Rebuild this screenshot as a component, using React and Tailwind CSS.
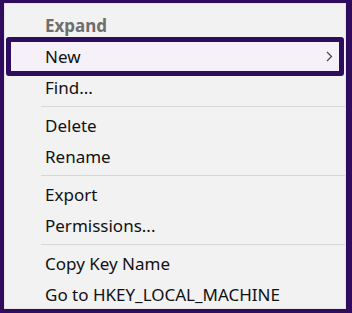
import React from 'react';

const groups = [
  ['Expand', 'New', 'Find...'],
  ['Delete', 'Rename'],
  ['Export', 'Permissions...'],
  ['Copy Key Name', 'Go to HKEY_LOCAL_MACHINE'],
];

const MenuRow = ({ label }) => {
  if (label === 'Expand') {
    return (
      <div className="h-[31px] flex items-center pl-[40px] font-bold text-[#6e6e6e]">
        {label}
      </div>
    );
  }
  if (label === 'New') {
    // highlighted item with the purple outline
    return (
      <div className="-my-[4px] ml-[1px] mr-[1px] h-[39px] border-[5px] border-[#2f0c5e] rounded-[3px] bg-[#f6f1f8] flex items-center justify-between pl-[34px] pr-[6px] text-[#111]">
        <span>{label}</span>
        <svg width="7" height="11" viewBox="0 0 7 11" fill="none">
          <polyline points="1,1 5.5,5.5 1,10" stroke="#444" strokeWidth="1.2" />
        </svg>
      </div>
    );
  }
  return (
    <div className="h-[31px] flex items-center pl-[40px] text-[#111]">{label}</div>
  );
};

const App = () => {
  return (
    <div className="w-[352px] h-[313px] bg-[#2f0c5e] pt-[3px] pl-[4px] pr-[6px] pb-[4px]">
      <div
        className="h-full bg-[#f2f2f2] border border-[#e4e4e4] pt-[6px] text-[17px]"
        style={{ fontFamily: '"Noto Sans", "Open Sans", sans-serif' }}
      >
        {groups.map((group, i) => (
          <div key={i}>
            {i > 0 && <div className="my-[3px] ml-[36px] h-px bg-[#d7d7d7]" />}
            {group.map((label) => (
              <MenuRow key={label} label={label} />
            ))}
          </div>
        ))}
      </div>
    </div>
  );
};

export default App;
